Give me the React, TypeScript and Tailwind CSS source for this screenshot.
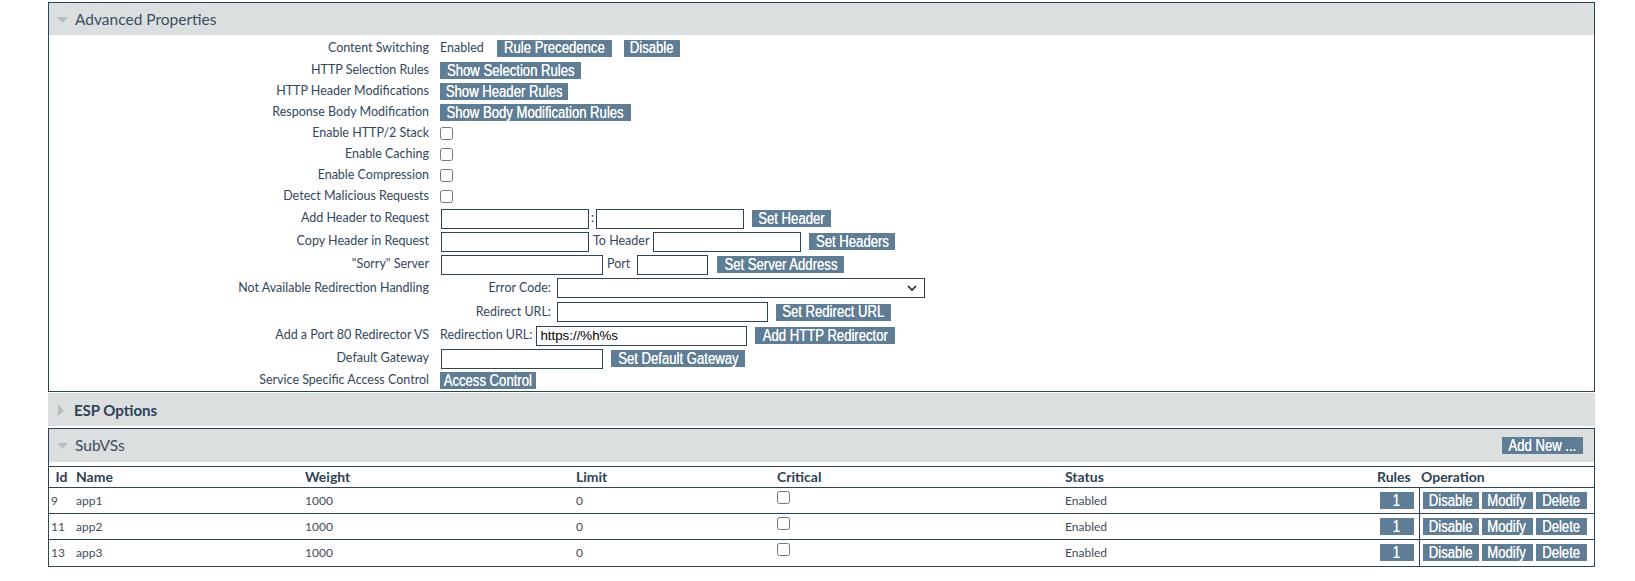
import React from 'react';

const BTN =
  "flex h-[17px] shrink-0 items-center justify-center overflow-visible whitespace-nowrap bg-[#5f7d95] text-[16px] leading-none text-white font-['Liberation_Sans',sans-serif]";
const INPUT = 'h-[20px] shrink-0 border border-[#2d4356] bg-white';

// narrow face is not available, so the label is squeezed to the condensed width
function Btn({ children, className = '' }: { children: React.ReactNode; className?: string }) {
  return (
    <span className={`${BTN} ${className}`}>
      <span className="shrink-0 scale-x-[0.82] [text-shadow:0_0_0.6px_#fff]">{children}</span>
    </span>
  );
}

function Row({
  label,
  h = 'h-[21px]',
  children,
}: {
  label?: string;
  h?: string;
  children?: React.ReactNode;
}) {
  return (
    <div className={`grid grid-cols-[380px_1fr] items-center gap-x-[11px] ${h}`}>
      <div className="text-right whitespace-nowrap">{label}</div>
      <div className="flex items-center whitespace-nowrap">{children}</div>
    </div>
  );
}

function Check() {
  return <input type="checkbox" className="m-0 h-[13px] w-[13px]" readOnly />;
}

function ArrowDown() {
  return (
    <svg width="11" height="6" viewBox="0 0 11 6" className="mr-[7px]">
      <path d="M0 0h11L5.5 6z" fill="#b9bdc0" />
    </svg>
  );
}

function ArrowRight() {
  return (
    <svg width="6" height="11" viewBox="0 0 6 11" className="mr-[10px]">
      <path d="M0 0l6 5.5L0 11z" fill="#b9bdc0" />
    </svg>
  );
}

const subs = [
  { id: 9, name: 'app1' },
  { id: 11, name: 'app2' },
  { id: 13, name: 'app3' },
];

export default function App() {
  return (
    <div className="min-h-[581px] bg-white pt-[2px] font-['Lato',sans-serif] text-[12.5px] text-[#33475b]">
      <div className="ml-[48px] w-[1547px]">
        {/* Advanced Properties */}
        <div className="border border-[#2d4356]">
          <div className="flex h-[32px] items-center bg-[#dbdfe0] pl-[8px] pt-[2px] text-[15.5px] text-[#3b4d5e]">
            <ArrowDown />
            Advanced Properties
          </div>
          <div className="pt-[1px]">
            <Row label="Content Switching" h="h-[24px]">
              <span>Enabled</span>
              <Btn className="ml-[13px] w-[115px]">Rule Precedence</Btn>
              <Btn className="ml-[12px] w-[56px]">Disable</Btn>
            </Row>
            <Row label="HTTP Selection Rules">
              <Btn className="w-[141px]">Show Selection Rules</Btn>
            </Row>
            <Row label="HTTP Header Modifications">
              <Btn className="w-[128px]">Show Header Rules</Btn>
            </Row>
            <Row label="Response Body Modification">
              <Btn className="w-[191px]">Show Body Modification Rules</Btn>
            </Row>
            <Row label="Enable HTTP/2 Stack">
              <Check />
            </Row>
            <Row label="Enable Caching">
              <Check />
            </Row>
            <Row label="Enable Compression">
              <Check />
            </Row>
            <Row label="Detect Malicious Requests">
              <Check />
            </Row>
            <Row label="Add Header to Request" h="h-[23px]">
              <div className={`${INPUT} ml-[1px] w-[148px]`} />
              <span className="mx-[2px]">:</span>
              <div className={`${INPUT} w-[148px]`} />
              <Btn className="ml-[8px] w-[79px]">Set Header</Btn>
            </Row>
            <Row label="Copy Header in Request" h="h-[23px]">
              <div className={`${INPUT} ml-[1px] w-[148px]`} />
              <span className="mx-[4px]">To Header</span>
              <div className={`${INPUT} w-[148px]`} />
              <Btn className="ml-[8px] w-[86px]">Set Headers</Btn>
            </Row>
            <Row label={'"Sorry" Server'} h="h-[23px]">
              <div className={`${INPUT} ml-[1px] w-[162px]`} />
              <span className="ml-[4px] mr-[7px]">Port</span>
              <div className={`${INPUT} w-[71px]`} />
              <Btn className="ml-[9px] w-[127px]">Set Server Address</Btn>
            </Row>
            <Row label="Not Available Redirection Handling" h="h-[24px]">
              <span className="w-[111px] text-right">Error Code:</span>
              <div className={`${INPUT} relative ml-[6px] w-[368px]`}>
                <svg
                  width="12"
                  height="12"
                  viewBox="0 0 12 12"
                  className="absolute right-[6px] top-[3px]"
                >
                  <path d="M2 4l4 4 4-4" fill="none" stroke="#222" strokeWidth="1.6" />
                </svg>
              </div>
            </Row>
            <Row h="h-[24px]">
              <span className="w-[111px] text-right">Redirect URL:</span>
              <div className={`${INPUT} ml-[6px] w-[211px]`} />
              <Btn className="ml-[8px] w-[115px]">Set Redirect URL</Btn>
            </Row>
            <Row label="Add a Port 80 Redirector VS" h="h-[23px]">
              <span>Redirection URL:</span>
              <div
                className={`${INPUT} ml-[4px] flex w-[211px] items-center pl-[3px] text-[13.3px] text-black font-['Liberation_Sans',sans-serif]`}
              >
                https://%h%s
              </div>
              <Btn className="ml-[8px] w-[140px]">Add HTTP Redirector</Btn>
            </Row>
            <Row label="Default Gateway" h="h-[23px]">
              <div className={`${INPUT} ml-[1px] w-[162px]`} />
              <Btn className="ml-[8px] w-[134px]">Set Default Gateway</Btn>
            </Row>
            <Row label="Service Specific Access Control">
              <Btn className="w-[96px]">Access Control</Btn>
            </Row>
          </div>
        </div>

        {/* ESP Options */}
        <div className="mt-[1px] flex h-[33px] items-center bg-[#dbdfe0] pl-[10px] pt-[1px] text-[15px] font-bold text-[#2f4255]">
          <ArrowRight />
          ESP Options
        </div>

        {/* SubVSs */}
        <div className="mt-[2px] border border-[#2d4356]">
          <div className="flex h-[33px] items-center bg-[#dbdfe0] pl-[8px] pr-[11px] text-[15.5px] text-[#3b4d5e]">
            <ArrowDown />
            SubVSs
            <Btn className="ml-auto w-[81px]">Add New ...</Btn>
          </div>
          <table className="mt-[4px] w-full table-fixed border-collapse">
            <colgroup>
              <col className="w-[25px]" />
              <col className="w-[229px]" />
              <col className="w-[271px]" />
              <col className="w-[201px]" />
              <col className="w-[288px]" />
              <col className="w-[312px]" />
              <col className="w-[44px]" />
              <col />
            </colgroup>
            <thead>
              <tr className="h-[21px] border-y border-[#2d4356] text-left text-[14px] leading-[16px] font-bold text-[#2f4255]">
                <th className="p-0 text-center font-bold">Id</th>
                <th className="px-[2px] font-bold">Name</th>
                <th className="px-[2px] font-bold">Weight</th>
                <th className="px-[2px] font-bold">Limit</th>
                <th className="px-[2px] font-bold">Critical</th>
                <th className="px-[2px] font-bold">Status</th>
                <th className="px-[2px] font-bold">Rules</th>
                <th className="px-[2px] font-bold">Operation</th>
              </tr>
            </thead>
            <tbody className="text-[12px] leading-[16px] text-[#3e4c59]">
              {subs.map((s, i) => (
                <tr
                  key={s.id}
                  className={`h-[26px] ${i < subs.length - 1 ? 'border-b border-[#2d4356]' : ''}`}
                >
                  <td className="px-[2px]">{s.id}</td>
                  <td className="px-[2px]">{s.name}</td>
                  <td className="px-[2px]">1000</td>
                  <td className="px-[2px]">0</td>
                  <td className="px-[2px] pt-[3px] align-top">
                    <div className="flex">
                      <Check />
                    </div>
                  </td>
                  <td className="px-[2px]">Enabled</td>
                  <td className="px-0">
                    <div className="flex justify-center">
                      <Btn className="w-[34px]">1</Btn>
                    </div>
                  </td>
                  <td className="border-l border-[#2d4356] pl-[3px]">
                    <div className="flex gap-[3px]">
                      <Btn className="w-[56px]">Disable</Btn>
                      <Btn className="w-[51px]">Modify</Btn>
                      <Btn className="w-[51px]">Delete</Btn>
                    </div>
                  </td>
                </tr>
              ))}
            </tbody>
          </table>
        </div>
      </div>
    </div>
  );
}
